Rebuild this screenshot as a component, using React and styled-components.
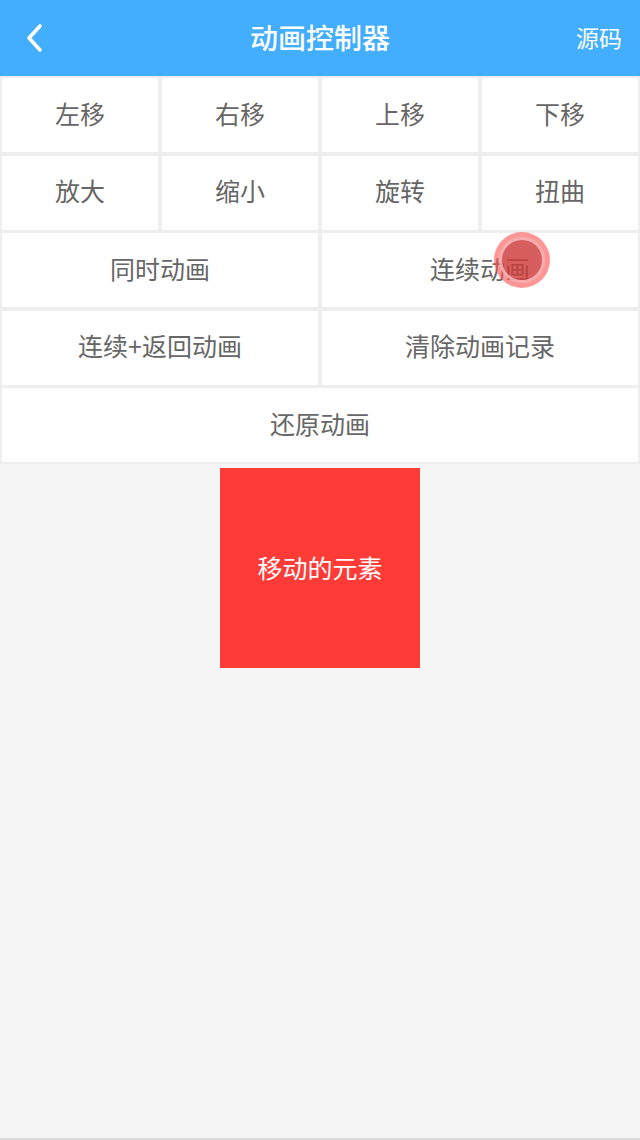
import React from "react";
import styled, { createGlobalStyle } from "styled-components";

const GlobalStyle = createGlobalStyle`
  html, body {
    margin: 0;
    padding: 0;
    background: #f5f5f6;
    font-family: "Noto Sans CJK SC", "Noto Sans", sans-serif;
  }
`;

const Page = styled.div`
  position: relative;
  width: 640px;
  height: 1140px;
  display: flex;
  flex-direction: column;
  background: #f5f5f6;
  border-bottom: 2px solid #dcdcdc;
  box-sizing: border-box;
  overflow: hidden;
`;

const Header = styled.header`
  height: 76px;
  flex: none;
  display: grid;
  grid-template-columns: 90px 1fr 90px;
  align-items: center;
  padding-bottom: 3px;
  box-sizing: border-box;
  background: #44aefe;
  color: #fff;
`;

const BackButton = styled.div`
  display: flex;
  align-items: center;
  padding-left: 22px;
  padding-top: 3px;
`;

const Title = styled.h1`
  margin: 0;
  text-align: center;
  font-size: 28px;
  font-weight: 500;
`;

const Source = styled.div`
  text-align: right;
  padding-right: 18px;
  font-size: 23px;
`;

const Grid = styled.div`
  display: grid;
  grid-template-columns: repeat(4, 1fr);
  grid-auto-rows: 74px;
  gap: 3.5px 4px;
  padding: 2px 2px;
  background: #eeeeee;
`;

const Cell = styled.button`
  grid-column: span ${(p) => p.span || 1};
  border: none;
  margin: 0;
  background: #fff;
  color: #666;
  font-family: inherit;
  font-size: 25px;
  display: flex;
  align-items: center;
  justify-content: center;
  padding: 0 0 5px;
`;

const Stage = styled.div`
  flex: 1;
  display: flex;
  justify-content: center;
  padding-top: 4px;
`;

const Box = styled.div`
  width: 200px;
  height: 200px;
  background: #ff3b38;
  color: #fff;
  font-size: 25px;
  display: flex;
  align-items: center;
  justify-content: center;
  padding-bottom: 3px;
  box-sizing: border-box;
`;

const Touch = styled.div`
  position: absolute;
  left: 494px;
  top: 232px;
  width: 56px;
  height: 56px;
  border-radius: 50%;
  background: rgba(255, 80, 80, 0.6);
  display: flex;
  align-items: center;
  justify-content: center;
  &::after {
    content: "";
    width: 40px;
    height: 40px;
    border-radius: 50%;
    border: 3px solid rgba(255, 200, 200, 0.75);
    background: rgba(180, 50, 50, 0.55);
  }
`;

const rows = [
  { label: "左移" }, { label: "右移" }, { label: "上移" }, { label: "下移" },
  { label: "放大" }, { label: "缩小" }, { label: "旋转" }, { label: "扭曲" },
  { label: "同时动画", span: 2 }, { label: "连续动画", span: 2 },
  { label: "连续+返回动画", span: 2 }, { label: "清除动画记录", span: 2 },
  { label: "还原动画", span: 4 },
];

export default function App() {
  return (
    <Page>
      <GlobalStyle />
      <Header>
        <BackButton>
          <svg width="26" height="32" viewBox="0 0 26 32">
            <path d="M18 4 L7 16 L18 28" fill="none" stroke="#fff" strokeWidth="3.6" strokeLinecap="round" strokeLinejoin="round" />
          </svg>
        </BackButton>
        <Title>动画控制器</Title>
        <Source>源码</Source>
      </Header>
      <Grid>
        {rows.map((r) => (
          <Cell key={r.label} span={r.span}>{r.label}</Cell>
        ))}
      </Grid>
      <Stage>
        <Box>移动的元素</Box>
      </Stage>
      <Touch />
    </Page>
  );
}
